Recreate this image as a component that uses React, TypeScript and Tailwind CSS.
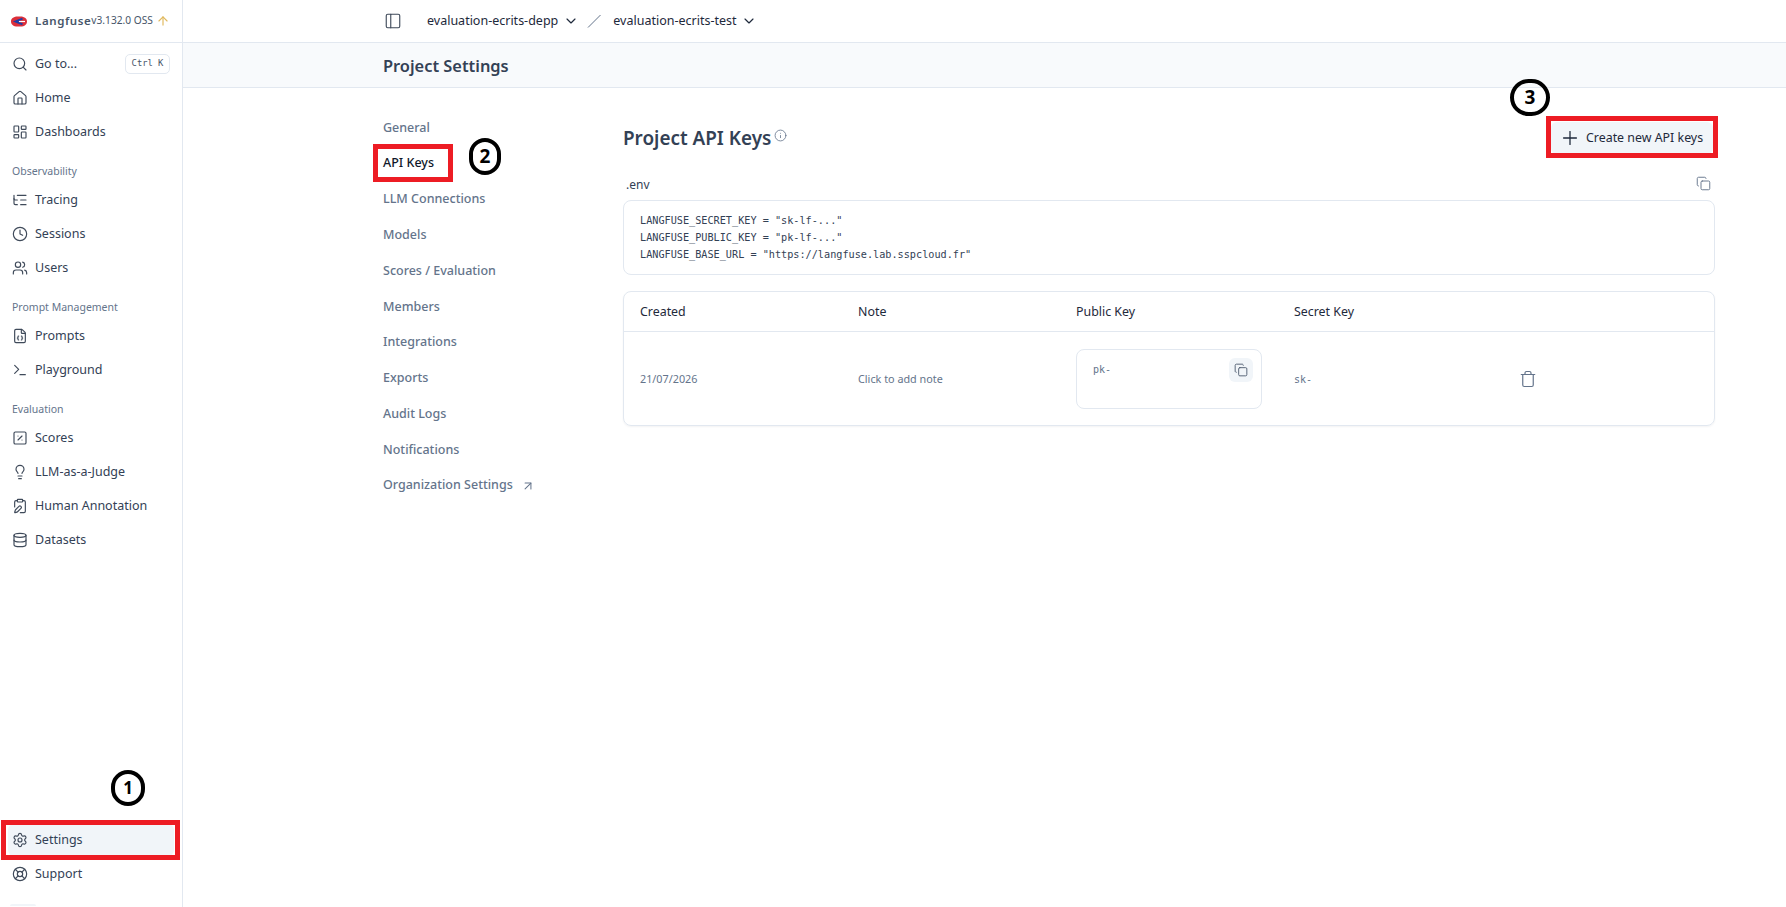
import {
  ArrowUp,
  ArrowUpRight,
  ChevronDown,
  ClipboardPen,
  Clock,
  Copy,
  Database,
  FileJson,
  Home,
  Info,
  LayoutDashboard,
  LifeBuoy,
  Lightbulb,
  ListTree,
  PanelLeft,
  Plus,
  Search,
  Settings,
  SquarePercent,
  Terminal,
  Trash,
  Users,
} from 'lucide-react';
import type { ComponentType } from 'react';

type NavItem = { label: string; icon: ComponentType<{ className?: string; strokeWidth?: number }> };

const groups: { title?: string; items: NavItem[] }[] = [
  {
    items: [
      { label: 'Home', icon: Home },
      { label: 'Dashboards', icon: LayoutDashboard },
    ],
  },
  {
    title: 'Observability',
    items: [
      { label: 'Tracing', icon: ListTree },
      { label: 'Sessions', icon: Clock },
      { label: 'Users', icon: Users },
    ],
  },
  {
    title: 'Prompt Management',
    items: [
      { label: 'Prompts', icon: FileJson },
      { label: 'Playground', icon: Terminal },
    ],
  },
  {
    title: 'Evaluation',
    items: [
      { label: 'Scores', icon: SquarePercent },
      { label: 'LLM-as-a-Judge', icon: Lightbulb },
      { label: 'Human Annotation', icon: ClipboardPen },
      { label: 'Datasets', icon: Database },
    ],
  },
];

const settingsNav = [
  'General',
  'API Keys',
  'LLM Connections',
  'Models',
  'Scores / Evaluation',
  'Members',
  'Integrations',
  'Exports',
  'Audit Logs',
  'Notifications',
];

function SideRow({ item, active }: { item: NavItem; active?: boolean }) {
  const Icon = item.icon;
  return (
    <div
      className={`mx-2 flex h-[32px] items-center gap-[7px] rounded-md pl-1 text-[12.5px] text-[#334155] ${active ? 'bg-[#f1f5f9]' : ''}`}
    >
      <Icon className="h-4 w-4 shrink-0 text-[#3f4a5a]" strokeWidth={1.75} />
      <span>{item.label}</span>
    </div>
  );
}

export default function App() {
  return (
    <div className="relative flex h-[907px] w-[1786px] overflow-hidden bg-white font-['Noto_Sans',sans-serif] text-[#0f172a]">
      {/* Sidebar */}
      <aside className="flex w-[183px] shrink-0 flex-col border-r border-[#e2e8f0]">
        <div className="flex h-[43px] shrink-0 items-center border-b border-[#e2e8f0] pl-[11px]">
          <svg viewBox="0 0 16 11" className="h-[11px] w-[16px] shrink-0" fill="none">
            <path d="M8 0.5 C2.5 0 0 2.5 0 5.5 C0 8.5 2.5 11 8 10.5 C13.5 11 16 8.5 16 5.5 C16 2.5 13.5 0 8 0.5 Z" fill="#dc2f3a" />
            <path d="M11.5 2.6 L4.5 5.5 L11.5 8.4" stroke="#1d3fa8" strokeWidth="2" />
            <path d="M8 5.5 H14" stroke="#ffffff" strokeWidth="1.2" />
          </svg>
          <span className="ml-[8px] text-[11.5px] font-semibold tracking-[0.6px] text-[#475569]">Langfuse</span>
          <span className="text-[10.2px] text-[#475569]">v3.132.0 OSS</span>
          <ArrowUp className="ml-[3px] h-[14px] w-[14px] text-[#e0b95e]" strokeWidth={2} />
        </div>

        <div className="mx-2 mt-[5px] flex h-[32px] items-center gap-[7px] pl-1 text-[12.5px] text-[#334155]">
          <Search className="h-4 w-4 shrink-0 text-[#3f4a5a]" strokeWidth={1.75} />
          <span>Go to...</span>
          <span className="ml-auto mr-[4px] flex h-[20px] w-[45px] items-center justify-center rounded-[5px] border border-[#e2e8f0] font-['DejaVu_Sans_Mono',monospace] text-[8.8px] text-[#475569]">
            Ctrl K
          </span>
        </div>

        <div className="mt-[2px] flex flex-col">
          {groups.map((group, i) => (
            <div key={i} className={i > 0 ? 'mt-[12px]' : ''}>
              {group.title && (
                <div className="flex h-[24px] items-center pl-3 text-[10.5px] text-[#64748b]">{group.title}</div>
              )}
              <div className="flex flex-col gap-[2px]">
                {group.items.map((item) => (
                  <SideRow key={item.label} item={item} />
                ))}
              </div>
            </div>
          ))}
        </div>

        <div className="mt-auto flex flex-col gap-[2px] pb-[1px]">
          <SideRow item={{ label: 'Settings', icon: Settings }} active />
          <SideRow item={{ label: 'Support', icon: LifeBuoy }} />
          <div className="ml-[10px] mt-[12px] h-[2px] w-[26px] rounded-t bg-[#f1f5f9]" />
        </div>
      </aside>

      {/* Main column */}
      <div className="flex min-w-0 flex-1 flex-col">
        <header className="flex h-[43px] shrink-0 items-center border-b border-[#e2e8f0] pl-[201px] text-[12.5px] text-[#1e293b]">
          <PanelLeft className="h-[18px] w-[18px] text-[#3f4a5a]" strokeWidth={1.5} />
          <span className="ml-[25px]">evaluation-ecrits-depp</span>
          <ChevronDown className="ml-[5px] h-4 w-4" strokeWidth={1.75} />
          <svg viewBox="0 0 16 16" className="ml-[7px] h-4 w-4 text-[#64748b]" fill="none" stroke="currentColor">
            <path d="M2 14.5 L14.5 2" />
          </svg>
          <span className="ml-[11px]">evaluation-ecrits-test</span>
          <ChevronDown className="ml-[5px] h-4 w-4" strokeWidth={1.75} />
        </header>

        <div className="flex h-[45px] shrink-0 items-center border-b border-[#e2e8f0] bg-[#f8fafc] pl-[200px] pt-[3px]">
          <h1 className="text-[16.4px] font-semibold text-[#334155]">Project Settings</h1>
        </div>

        <div className="flex pl-[200px]">
          <nav className="w-[240px] shrink-0 pt-[22px]">
            {settingsNav.map((label) => (
              <div
                key={label}
                className={`flex h-[35.8px] items-center text-[12.5px] font-medium ${label === 'API Keys' ? 'text-[#0f172a]' : 'text-[#64748b]'}`}
              >
                {label}
              </div>
            ))}
            <div className="flex h-[35.8px] items-center text-[12.5px] font-medium text-[#64748b]">
              Organization Settings
              <ArrowUpRight className="ml-[8px] h-[14px] w-[14px]" strokeWidth={1.75} />
            </div>
          </nav>

          <main className="w-[1092px] shrink-0">
            <div className="flex h-[72px] items-center justify-between pt-[28px]">
              <div className="flex items-center">
                <h2 className="text-[18.9px] font-semibold text-[#334155]">Project API Keys</h2>
                <Info className="mb-[4px] ml-[3px] h-[13px] w-[13px] text-[#64748b]" strokeWidth={1.5} />
              </div>
              <button className="mr-[2px] flex h-[32px] w-[162px] items-center rounded-md bg-[#f1f5f9] pl-[8px] text-[12.4px] text-[#1e293b]">
                <Plus className="h-[22px] w-[22px]" strokeWidth={1.4} />
                <span className="ml-[5px]">Create new API keys</span>
              </button>
            </div>

            <div className="mt-[13px] flex h-[24px] items-center justify-between pl-[3px] pr-[4px] text-[12px] text-[#334155]">
              <span>.env</span>
              <Copy className="mb-[4px] h-[15px] w-[15px] text-[#64748b]" strokeWidth={1.5} />
            </div>

            <pre className="mt-[3px] h-[75px] rounded-lg border border-[#e2e8f0] px-4 py-[11px] font-['DejaVu_Sans_Mono',monospace] text-[10.2px] leading-[17px] text-[#334155]">
              {'LANGFUSE_SECRET_KEY = "sk-lf-..."\nLANGFUSE_PUBLIC_KEY = "pk-lf-..."\nLANGFUSE_BASE_URL = "https://langfuse.lab.sspcloud.fr"'}
            </pre>

            <div className="mt-[16px] rounded-lg border border-[#e2e8f0] shadow-[0_1px_2px_rgba(15,23,42,0.05)]">
              <div className="grid h-[40px] grid-cols-[218px_218px_218px_218px_1fr] items-center border-b border-[#e2e8f0] pl-4 pt-[2px] text-[12.4px] text-[#1e293b]">
                <span>Created</span>
                <span>Note</span>
                <span>Public Key</span>
                <span>Secret Key</span>
                <span />
              </div>
              <div className="grid h-[93px] grid-cols-[218px_218px_218px_218px_1fr] items-center pl-4 text-[10.8px] text-[#64748b]">
                <span className="pt-[2px]">21/07/2026</span>
                <span className="pt-[2px]">Click to add note</span>
                <div className="flex h-[60px] w-[186px] items-start justify-between rounded-lg border border-[#e2e8f0] pl-4 pr-2 pt-2">
                  <span className="mt-[4px] font-['DejaVu_Sans_Mono',monospace] text-[10px]">pk-</span>
                  <span className="flex h-[24px] w-[24px] items-center justify-center rounded-md bg-[#f1f5f9]">
                    <Copy className="h-[14px] w-[14px] text-[#475569]" strokeWidth={1.5} />
                  </span>
                </div>
                <span className="pt-[2px] font-['DejaVu_Sans_Mono',monospace] text-[10px]">sk-</span>
                <Trash className="ml-[7px] h-[18px] w-[18px]" strokeWidth={1.6} />
              </div>
            </div>
          </main>
        </div>
      </div>

      {/* Tutorial annotations drawn over the screenshot */}
      <div className="pointer-events-none absolute left-[1px] top-[820px] h-[40px] w-[179px] border-[5px] border-[#ed1c24]" />
      <div className="pointer-events-none absolute left-[373px] top-[144px] h-[38px] w-[80px] border-[5px] border-[#ed1c24]" />
      <div className="pointer-events-none absolute left-[1546px] top-[116px] h-[42px] w-[172px] border-[5px] border-[#ed1c24]" />

      <div className="absolute left-[111px] top-[770px] flex h-[36px] w-[34px] items-center justify-center rounded-full border-[4px] border-black text-[17px] font-bold text-black">1</div>
      <div className="absolute left-[469px] top-[138px] flex h-[37px] w-[32px] items-center justify-center rounded-full border-[4px] border-black text-[19px] font-bold text-black">2</div>
      <div className="absolute left-[1510px] top-[79px] flex h-[37px] w-[40px] items-center justify-center rounded-full border-[4px] border-black text-[19px] font-bold text-black">3</div>
    </div>
  );
}
